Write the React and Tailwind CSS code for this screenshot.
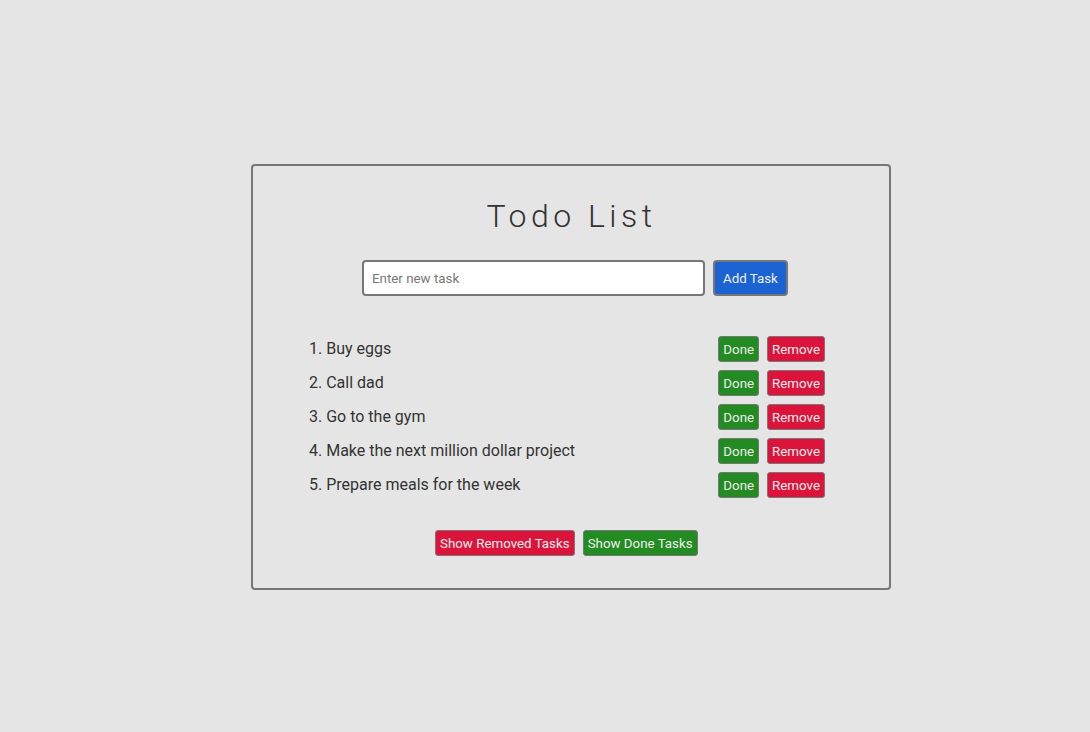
import { useState } from "react";

const initialTasks = [
  "Buy eggs",
  "Call dad",
  "Go to the gym",
  "Make the next million dollar project",
  "Prepare meals for the week",
];

export default function App() {
  const [tasks, setTasks] = useState(initialTasks);
  const [newTask, setNewTask] = useState("");

  const addTask = () => {
    if (!newTask.trim()) return;
    setTasks((prev) => [...prev, newTask.trim()]);
    setNewTask("");
  };

  const removeTask = (i) => setTasks((prev) => prev.filter((_, idx) => idx !== i));

  return (
    <div
      className="min-h-screen w-full bg-[#e5e5e5] pt-[164px] pl-[251px]"
      style={{ fontFamily: "Roboto, 'Liberation Sans', sans-serif" }}
    >
      <div className="w-[640px] h-[426px] border-2 border-[#777777] rounded-[4px] pt-[31px] flex flex-col">
        <h1 className="text-center text-[32px] leading-[38px] tracking-[4.5px] text-[#333333] font-light pl-[1px]">
          Todo List
        </h1>

        <div className="flex gap-2 ml-[109px] mt-[25px]">
          <input
            type="text"
            value={newTask}
            onChange={(e) => setNewTask(e.target.value)}
            placeholder="Enter new task"
            className="w-[343px] h-[36px] bg-white border-2 border-[#777777] rounded-[4px] px-2 text-[13.33px] text-[#333333] placeholder:text-[#777777] outline-none"
          />
          <button
            onClick={addTask}
            className="h-[36px] px-2 pt-px bg-[#1b63d3] border-2 border-[#777777] rounded-[4px] text-[13.33px] text-[#eeeeee]"
          >
            Add Task
          </button>
        </div>

        <ol className="ml-[56px] w-[516px] mt-[40px] flex flex-col gap-2">
          {tasks.map((task, i) => (
            <li key={i} className="flex items-center justify-between h-[26px]">
              <span className="text-[16px] text-[#333333]">
                {i + 1}. {task}
              </span>
              <div className="flex gap-2">
                <button className="h-[26px] px-[4px] pt-px bg-[#228b22] border border-[#777777] rounded-[3px] text-[13.33px] text-[#eeeeee]">
                  Done
                </button>
                <button
                  onClick={() => removeTask(i)}
                  className="h-[26px] px-[4px] pt-px bg-[#dc143c] border border-[#777777] rounded-[3px] text-[13.33px] text-[#eeeeee]"
                >
                  Remove
                </button>
              </div>
            </li>
          ))}
        </ol>

        <div className="flex gap-2 ml-[182px] mt-[32px]">
          <button className="h-[26px] px-[4px] pt-px bg-[#dc143c] border border-[#777777] rounded-[3px] text-[13.33px] text-[#eeeeee]">
            Show Removed Tasks
          </button>
          <button className="h-[26px] px-[4px] pt-px bg-[#228b22] border border-[#777777] rounded-[3px] text-[13.33px] text-[#eeeeee]">
            Show Done Tasks
          </button>
        </div>
      </div>
    </div>
  );
}
